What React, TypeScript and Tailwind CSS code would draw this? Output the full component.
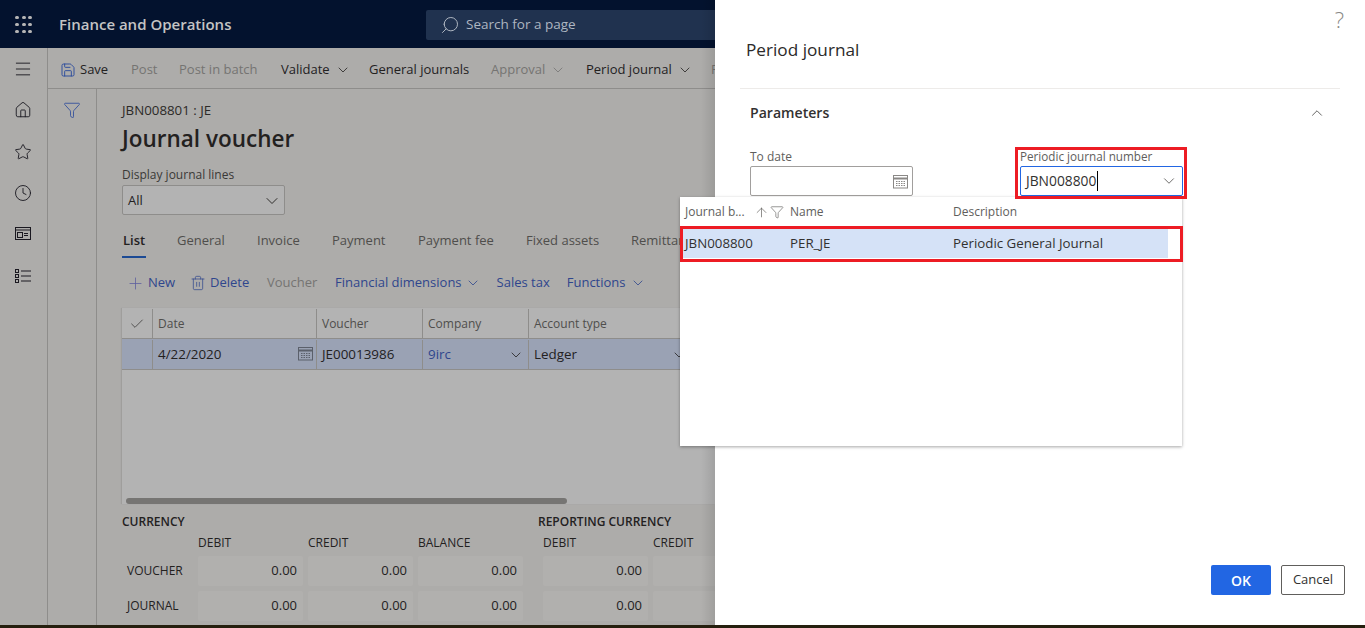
import React from "react";
import { ChevronDown, ChevronUp, Check, Star, Clock, Home, Search, Plus, Trash2, Filter, Save, Menu, ArrowUp } from "lucide-react";

const font = { fontFamily: '"Open Sans", "Noto Sans", sans-serif' };

function Chev({ className = "", size = 16 }: { className?: string; size?: number }) {
  return <ChevronDown size={size} strokeWidth={1.2} className={className} />;
}

function Cal({ className = "" }: { className?: string }) {
  return (
    <svg width="15" height="15" viewBox="0 0 15 15" fill="none" stroke="currentColor" strokeWidth="1" className={className}>
      <rect x="0.5" y="1.5" width="14" height="12.5" />
      <path d="M0.5 4.5h14" strokeWidth="2" />
      <path d="M3 7.5h9M3 9.5h9M3 11.5h9" strokeDasharray="1.5 1" />
    </svg>
  );
}

function Waffle() {
  const dots = [0, 1, 2, 3, 4, 5, 6, 7, 8];
  return (
    <div className="grid grid-cols-3 gap-[4px] w-[16px]">
      {dots.map((d) => (
        <div key={d} className="w-[4px] h-[3px] rounded-full bg-[#b5b5b5]" />
      ))}
    </div>
  );
}

function ToolItem({ label, width, tone, chev }: { label: string; width: number; tone: string; chev?: boolean }) {
  return (
    <div style={{ width }} className={`flex items-center gap-[5px] shrink-0 whitespace-nowrap ${tone}`}>
      <span>{label}</span>
      {chev && <Chev size={16} />}
    </div>
  );
}

function Tab({ label, width, active }: { label: string; width: number; active?: boolean }) {
  return (
    <div style={{ width }} className="shrink-0 whitespace-nowrap">
      <div className={`inline-block h-[28px] pt-[1px] ${active ? "text-[#23211f] font-semibold border-b-2 border-[#1c4a94] px-[1px] -ml-[1px]" : "text-[#4f4e4c]"}`}>
        {label}
      </div>
    </div>
  );
}

function Cell({ value }: { value: string }) {
  return (
    <div className="w-[105px] h-[30px] bg-[#b1b0ae] rounded-[2px] flex items-center justify-end pr-[6px] text-[13px] text-[#23211f]">
      {value}
    </div>
  );
}

function Totals() {
  return (
    <div className="flex-1 pl-[25px] text-[#23211f] overflow-hidden">
      <div className="flex h-[17px] mt-[9px] text-[12px] font-semibold leading-[17px]">
        <div className="w-[416px]">CURRENCY</div>
        <div className="whitespace-nowrap">REPORTING CURRENCY</div>
      </div>
      <div className="flex h-[23px] text-[12px] items-end pb-[1px] w-[700px]">
        <div className="w-[76px]" />
        <div className="w-[110px]">DEBIT</div>
        <div className="w-[110px]">CREDIT</div>
        <div className="w-[125px]">BALANCE</div>
        <div className="w-[110px]">DEBIT</div>
        <div className="w-[110px]">CREDIT</div>
      </div>
      <div className="flex flex-col gap-[5px] mt-[3px]">
        {["VOUCHER", "JOURNAL"].map((r) => (
          <div key={r} className="flex items-center h-[30px] w-[700px] text-[12px]">
            <div className="w-[76px] pl-[5px]">{r}</div>
            <div className="flex gap-[5px]">
              <Cell value="0.00" />
              <Cell value="0.00" />
              <Cell value="0.00" />
            </div>
            <div className="flex gap-[5px] ml-[20px]">
              <Cell value="0.00" />
              <Cell value="" />
            </div>
          </div>
        ))}
      </div>
    </div>
  );
}

function Background() {
  return (
    <div className="w-[715px] shrink-0 flex flex-col overflow-hidden relative bg-[#adacaa]">
      <div className="h-[48px] shrink-0 bg-[#03122e] flex items-center">
        <div className="w-[47px] pl-[15px]"><Waffle /></div>
        <div className="w-[379px] pl-[12px] text-[#c4c4c4] text-[15px] font-semibold whitespace-nowrap">Finance and Operations</div>
        <div className="flex-1 h-[30px] mb-[-1px] bg-[#20324f] rounded-l-[2px] flex items-center pl-[14px] text-[#aeb6c1] text-[13.5px] gap-[6px]">
          <Search size={20} strokeWidth={1.2} className="-scale-x-100" />
          <span>Search for a page</span>
        </div>
      </div>
      <div className="flex-1 flex min-h-0">
        <div className="w-[48px] shrink-0 border-r border-[#8e8d8b] flex flex-col items-center text-[#1a1820]">
          <Menu size={20} strokeWidth={1.1} className="mt-[11px] ml-[-1px]" />
          <Home size={18} strokeWidth={1.2} className="mt-[22px] ml-[-1px]" />
          <Star size={18} strokeWidth={1.2} className="mt-[24px] ml-[-1px]" />
          <Clock size={18} strokeWidth={1.2} className="mt-[23px] ml-[-1px]" />
          <svg width="16" height="14" viewBox="0 0 16 14" fill="none" stroke="currentColor" className="mt-[25px] ml-[-1px]">
            <rect x="0.5" y="0.5" width="15" height="12" />
            <path d="M0.5 3h15" />
            <rect x="2.5" y="5.5" width="5" height="5" />
            <path d="M9 6.5h4M9 8.5h4" />
          </svg>
          <svg width="16" height="15" viewBox="0 0 16 15" fill="none" stroke="currentColor" className="mt-[28px] ml-[-1px]">
            <rect x="0.5" y="0.5" width="3" height="3" />
            <rect x="0.5" y="5.5" width="3" height="3" />
            <rect x="0.5" y="10.5" width="3" height="3" />
            <path d="M6 2h10M6 7h10M6 12h10" />
          </svg>
        </div>
        <div className="flex-1 flex flex-col min-w-0">
          <div className="h-[41px] shrink-0 border-b border-[#8e8d8b] flex items-center pl-[12px] pt-[3px] text-[13px] overflow-hidden">
            <div className="w-[71px] shrink-0 flex items-center gap-[4px] text-[#23211f]">
              <Save size={16} strokeWidth={1.4} className="text-[#2a4a9c]" />
              <span>Save</span>
            </div>
            <ToolItem label="Post" width={48} tone="text-[#757472]" />
            <ToolItem label="Post in batch" width={102} tone="text-[#757472]" />
            <ToolItem label="Validate" width={88} tone="text-[#23211f]" chev />
            <ToolItem label="General journals" width={122} tone="text-[#23211f]" />
            <ToolItem label="Approval" width={95} tone="text-[#757472]" chev />
            <ToolItem label="Period journal" width={125} tone="text-[#23211f]" chev />
            <ToolItem label="Post" width={30} tone="text-[#757472]" />
          </div>
          <div className="flex-1 flex min-h-0">
            <div className="w-[49px] shrink-0 border-r border-[#8e8d8b] flex justify-center pt-[12px]">
              <Filter size={18} strokeWidth={1.1} className="text-[#2a4a9c] -ml-[1px]" />
            </div>
            <div className="flex-1 flex flex-col min-w-0">
              <div className="pl-[25px] text-[13.3px] text-[#2c2a28] mt-[12px] leading-[18px]">JBN008801 : JE</div>
              <div className="pl-[25px] text-[22.5px] font-semibold text-[#23211f] leading-[30px] mt-[5px]">Journal voucher</div>
              <div className="pl-[25px] text-[12px] text-[#3a3937] mt-[12px] leading-[17px]">Display journal lines</div>
              <div className="ml-[25px] mt-[2px] w-[163px] h-[30px] bg-[#b3b3b3] border border-[#8e8d8b] rounded-[2px] flex items-center justify-between pl-[5px] pr-[2px] pt-[1px] text-[13px] text-[#23211f] shrink-0">
                <span>All</span>
                <ChevronDown size={20} strokeWidth={1.1} />
              </div>
              <div className="pl-[26px] mt-[15px] flex text-[13px] h-[28px] shrink-0">
                <Tab label="List" width={54} active />
                <Tab label="General" width={80} />
                <Tab label="Invoice" width={75} />
                <Tab label="Payment" width={86} />
                <Tab label="Payment fee" width={108} />
                <Tab label="Fixed assets" width={105} />
                <Tab label="Remittance" width={90} />
              </div>
              <div className="pl-[29px] mt-[11px] h-[28px] shrink-0 flex items-center text-[13px] text-[#2f468d] whitespace-nowrap">
                <Plus size={19} strokeWidth={1} className="text-[#5c5f9e] mr-[3px]" />
                <span className="w-[42px]">New</span>
                <Trash2 size={16} strokeWidth={1.1} className="mr-[4px]" />
                <span className="w-[57px]">Delete</span>
                <span className="w-[68px] text-[#757472]">Voucher</span>
                <span>Financial dimensions</span>
                <Chev size={16} className="ml-[3px]" />
                <span className="ml-[16px]">Sales tax</span>
                <span className="ml-[17px]">Functions</span>
                <Chev size={16} className="ml-[4px]" />
              </div>
              <div className="ml-[25px] mt-[11px] h-[196px] shrink-0 bg-[#b3b3b3] flex flex-col text-[13.4px] shadow-[-1px_0_1px_rgba(0,0,0,0.08)]">
                <div className="h-[31px] pt-[1px] flex border-b border-[#8e8d8b] text-[12px] font-medium text-[#4f4e4c] shrink-0">
                  <div className="w-[31px] border-r border-[#8e8d8b] flex items-center justify-center text-[#23211f]"><Check size={16} strokeWidth={1} /></div>
                  <div className="w-[164px] border-r border-[#8e8d8b] flex items-center pl-[5px]">Date</div>
                  <div className="w-[106px] border-r border-[#8e8d8b] flex items-center pl-[5px]">Voucher</div>
                  <div className="w-[106px] border-r border-[#8e8d8b] flex items-center pl-[5px]">Company</div>
                  <div className="flex-1 flex items-center pl-[5px]">Account type</div>
                </div>
                <div className="h-[31px] pt-[1px] flex border-b border-[#8e8d8b] bg-[#9aa2b4] text-[#23211f] shrink-0">
                  <div className="w-[31px] border-r border-[#8e8d8b]" />
                  <div className="w-[164px] border-r border-[#8e8d8b] flex items-center justify-between pl-[5px] pr-[3px]">
                    <span>4/22/2020</span>
                    <Cal className="text-[#5b606b] -mt-[3px]" />
                  </div>
                  <div className="w-[106px] border-r border-[#8e8d8b] flex items-center pl-[5px]">JE00013986</div>
                  <div className="w-[106px] border-r border-[#8e8d8b] flex items-center justify-between pl-[5px] pr-[4px]">
                    <span className="text-[#2f468d]">9irc</span>
                    <Chev />
                  </div>
                  <div className="flex-1 flex items-center pl-[5px]">
                    <span className="w-[137px]">Ledger</span>
                    <Chev />
                  </div>
                </div>
                <div className="flex-1" />
                <div className="h-[6px] w-[441px] ml-[4px] bg-[#767573] rounded-full shrink-0" />
              </div>
              <Totals />
            </div>
          </div>
        </div>
        <div className="absolute top-0 right-0 w-[14px] h-full bg-gradient-to-r from-transparent to-black/10" />
      </div>
    </div>
  );
}

function Panel() {
  return (
    <div className="flex-1 bg-white flex flex-col relative px-[25px] text-[#323130]">
      <div className="absolute top-[6px] right-[21px] text-[#8a8886] text-[22px] font-light leading-[26px]">?</div>
      <div className="pl-[6px] pt-[38px] text-[17.2px] leading-[24px] text-[#2b2a29] h-[89px] border-b border-[#edebe9]">Period journal</div>
      <div className="flex items-center justify-between h-[47px] pl-[10px] pr-[14px] text-[14.1px] font-semibold">
        <span>Parameters</span>
        <ChevronUp size={18} strokeWidth={1} />
      </div>
      <div className="flex pl-[10px] mt-[12px]">
        <div className="w-[270px]">
          <div className="text-[12px] leading-[17px] text-[#605e5c]">To date</div>
          <div className="mt-[1px] w-[163px] h-[30px] border border-[#a19f9d] rounded-[2px] flex items-center justify-end pr-[4px]">
            <Cal className="text-[#8a8886]" />
          </div>
        </div>
        <div className="w-[163px]">
          <div className="text-[11.7px] leading-[17px] text-[#605e5c] whitespace-nowrap">Periodic journal number</div>
          <div className="mt-[1px] h-[30px] border border-[#2266e3] rounded-[2px] flex items-center justify-between pl-[5px] pr-[4px] text-[13.8px] text-[#323130]">
            <span className="border-r border-black pr-[1px]">JBN008800</span>
            <Chev size={18} className="text-[#605e5c]" />
          </div>
        </div>
      </div>
      <div className="flex-1" />
      <div className="flex justify-end gap-[10px] pb-[30px] -mr-[5px] text-[14px]">
        <button className="w-[60px] h-[30px] bg-[#2266e3] text-white font-semibold rounded-[2px]">OK</button>
        <button className="w-[64px] h-[30px] bg-white border border-[#605e5c] rounded-[2px] text-[13px]">Cancel</button>
      </div>
    </div>
  );
}

function Lookup() {
  return (
    <div className="absolute left-[680px] top-[197px] w-[502px] h-[249px] bg-white shadow-[0_1px_3px_rgba(0,0,0,0.35)] text-[13.3px] text-[#323130]">
      <div className="flex h-[32px] pb-[2px] items-center text-[12px] font-medium text-[#605e5c]">
        <div className="w-[110px] pl-[5px] flex items-center whitespace-nowrap">
          <span className="w-[68px]">Journal b...</span>
          <ArrowUp size={15} strokeWidth={1.1} className="ml-[1px]" />
          <Filter size={14} strokeWidth={1.1} className="ml-[1px]" />
        </div>
        <div className="w-[163px]">Name</div>
        <div>Description</div>
      </div>
      <div className="flex h-[29px] pt-[1px] items-center w-[488px] bg-[#d5e2f7]">
        <div className="w-[110px] pl-[5px]">JBN008800</div>
        <div className="w-[163px]">PER_JE</div>
        <div>Periodic General Journal</div>
      </div>
    </div>
  );
}

export default function App() {
  return (
    <div style={font} className="relative w-[1365px] h-[628px] overflow-hidden flex flex-col bg-[#2a2410]">
      <div className="h-[625px] flex shrink-0">
        <Background />
        <Panel />
      </div>
      <div className="h-[3px] bg-[#251f0e]" />
      <Lookup />
      <div className="absolute left-[1015px] top-[147px] w-[172px] h-[52px] border-[3px] border-[#ed1c24]" />
      <div className="absolute left-[680px] top-[226px] w-[503px] h-[36px] border-[3px] border-[#ed1c24]" />
    </div>
  );
}
